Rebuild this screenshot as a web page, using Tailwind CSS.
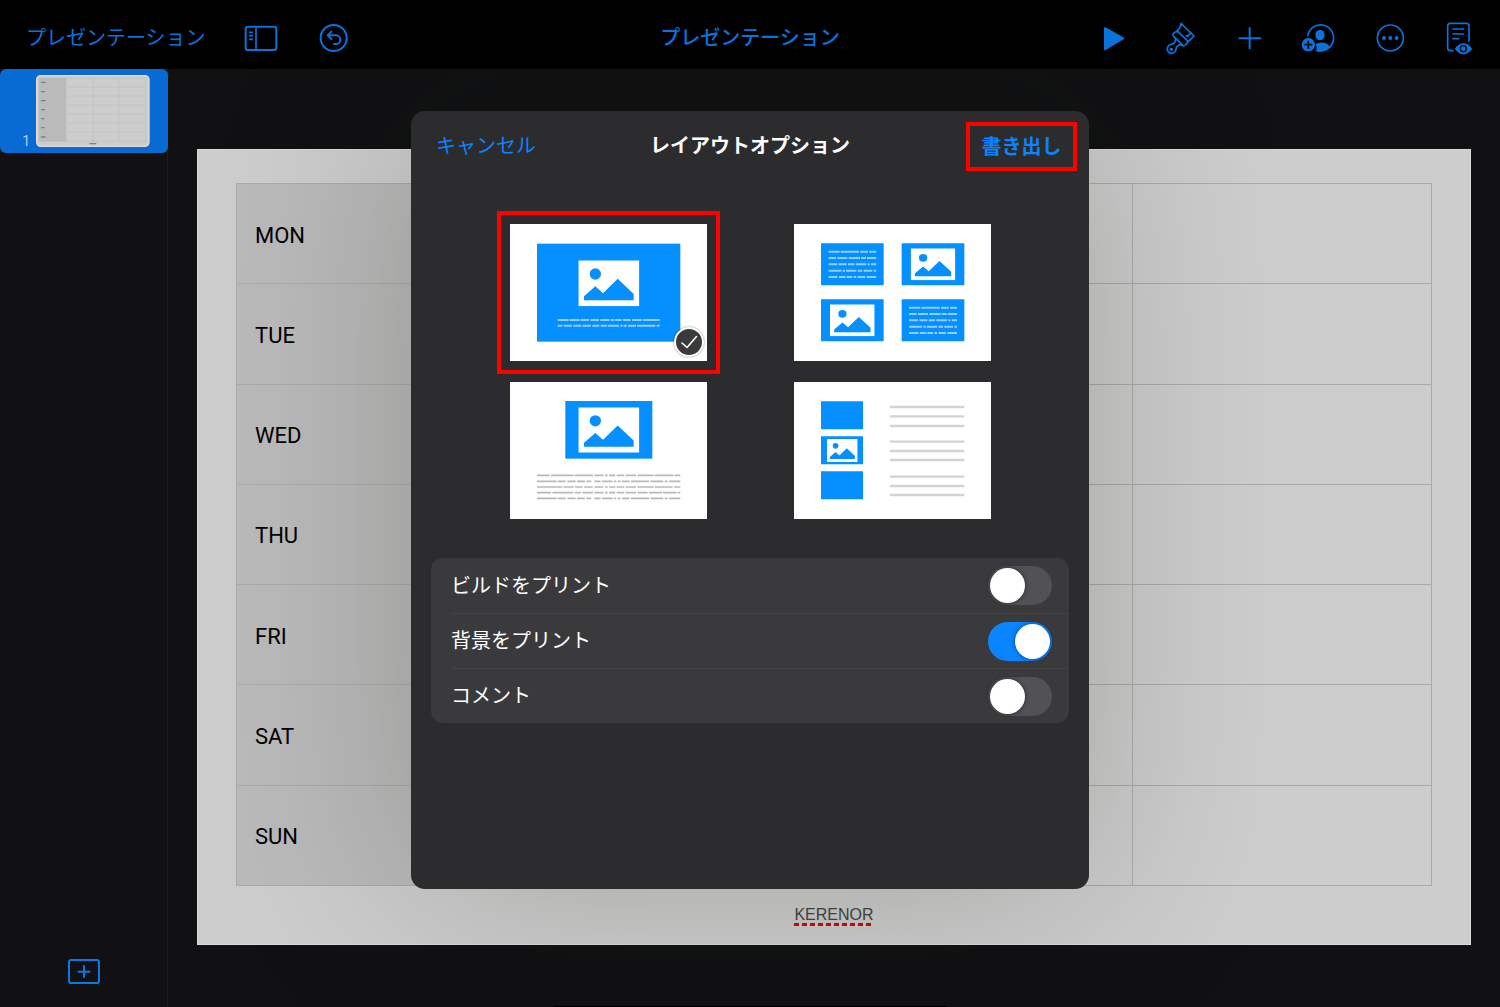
<!DOCTYPE html>
<html lang="ja">
<head>
<meta charset="utf-8">
<meta name="viewport" content="width=device-width, initial-scale=1">
<title>プレゼンテーション</title>
<script src="https://cdn.jsdelivr.net/npm/@tailwindcss/browser@4"></script>
</head>
<body class="relative flex min-h-screen flex-col overflow-x-hidden bg-[#111113] font-['Noto_Sans_CJK_JP',sans-serif] text-xl leading-7">

<!-- Shared picture placeholder and text block -->
<svg class="hidden" aria-hidden="true">
  <symbol id="pic" viewBox="0 0 183 138" preserveAspectRatio="none">
    <rect width="183" height="138" fill="#fff"/>
    <circle cx="51" cy="41" r="17" fill="#058fff"/>
    <path d="M17 108 51 78 74 99 118 55 166 101V120H17Z" fill="#058fff"/>
  </symbol>
  <symbol id="lines" viewBox="143 120 145 84">
    <path stroke="#95cdff" stroke-width="6" d="M143 124H177M180 124H235M239 124H262M266 124H287M143 143H166M170 143H200M204 143H238M241 143H256M259 143H287M143 162H170M174 162H198M202 162H221M225 162H257M261 162H267M271 162H287M143 181H182M186 181H193M196 181H227M231 181H245M249 181H275M279 181H287M143 200H171M175 200H195M198 200H215M219 200H227M231 200H254M258 200H287"/>
  </symbol>
</svg>

<header class="grid h-[69px] grid-cols-[1fr_auto_1fr] items-center bg-black px-[22px] pt-2 text-[#0b72dc]">
  <div class="flex items-center gap-[37px] pl-1">
    <a href="#" class="pb-[3px] whitespace-nowrap">プレゼンテーション</a>
    <button type="button" aria-label="表示"><svg class="size-9" viewBox="729 62 108 108" fill="none" stroke="currentColor" stroke-width="6"><rect x="737" y="79" width="92" height="70" rx="7"/><path d="M768 79V149M747 96H759M747 106H759M747 117H759" stroke-width="5"/></svg></button>
    <button type="button" aria-label="取り消す"><svg class="size-9" viewBox="948 62 108 108" fill="none" stroke="currentColor" stroke-width="6" stroke-linecap="round" stroke-linejoin="round"><circle cx="1001" cy="113" r="39"/><path d="M994 94 983 105 994 116M984 105H1008A13 13 0 0 1 1008 131H1002"/></svg></button>
  </div>
  <h1 class="pb-[3px] font-medium">プレゼンテーション</h1>
  <div class="flex justify-end gap-[33px]">
    <button type="button" aria-label="再生"><svg class="size-9" viewBox="51 62 108 108" fill="currentColor"><path d="M72 84Q72 79 77 81L132 112Q135 114 132 116L77 149Q72 151 72 146Z"/></svg></button>
    <button type="button" aria-label="フォーマット"><svg class="size-9" viewBox="258 62 108 108" fill="none" stroke="currentColor" stroke-width="5" stroke-linejoin="round" stroke-linecap="round"><path d="M303 69 342 107 325 124 291 91Q302 84 303 69ZM291 94Q283 94 279 101Q278 105 281 108L309 136Q313 138 318 132Q323 128 322 123M284 111Q290 121 281 130L268 134Q257 143 265 155Q277 164 286 153L290 140Q296 130 306 135M333 97 323 108 L319 106"/><circle cx="274" cy="147" r="5" fill="currentColor" stroke="none"/></svg></button>
    <button type="button" aria-label="追加"><svg class="size-9" viewBox="465 62 108 108" fill="none" stroke="currentColor" stroke-width="6"><path d="M509 81V147M476 114H543"/></svg></button>
    <button type="button" aria-label="共同制作"><svg class="size-9 overflow-visible" viewBox="672 62 108 108" fill="currentColor"><path d="M683 108A39 39 0 1 1 711 150" fill="none" stroke="currentColor" stroke-width="5"/><ellipse cx="720" cy="104" rx="14" ry="16"/><path d="M707 153Q714 143 706 132Q720 123 738 129Q747 133 748 139Q733 158 707 153Z"/><circle cx="685" cy="133" r="20"/><path d="M685 121V145M673 133H697" stroke="#000" stroke-width="5"/></svg></button>
    <button type="button" aria-label="その他"><svg class="size-9" viewBox="879 62 108 108" fill="currentColor"><circle cx="931" cy="113" r="39" fill="none" stroke="currentColor" stroke-width="5"/><circle cx="912" cy="113" r="6"/><circle cx="931" cy="113" r="6"/><circle cx="950" cy="113" r="6"/></svg></button>
    <button type="button" aria-label="閲覧モード"><svg class="size-9" viewBox="1086 62 108 108" fill="none" stroke="currentColor" stroke-width="5"><path d="M1121 151H1111Q1103 151 1103 143V77Q1103 69 1111 69H1159Q1167 69 1167 77V124M1117 86H1153M1117 101H1153M1117 115H1137"/><path d="M1124 145Q1150 112 1177 145Q1150 178 1124 145Z" fill="currentColor" stroke="none"/><circle cx="1150" cy="145" r="9" stroke="#000" stroke-width="4"/></svg></button>
  </div>
</header>

<div class="flex flex-1">
  <nav class="flex w-[168px] shrink-0 flex-col items-stretch justify-between border-r border-[#1d1d1f] pb-[23px]" aria-label="スライド">
    <a href="#" class="-mr-px flex h-[84px] items-end rounded-md bg-[#086bd3] pb-1.5">
      <span class="w-9 pr-1.5 text-right font-['Roboto',sans-serif] text-sm leading-3 text-[#b9cde6]">1</span>
      <svg class="h-[72px] w-[114px]" viewBox="109 226 342 216">
        <rect x="111" y="228" width="337" height="212" rx="12" fill="#cdcdcd" stroke="#e4dcd4" stroke-width="4"/>
        <rect x="118" y="235" width="82" height="190" fill="#bababa"/>
        <path d="M118 235H438V425H118ZM118 262H438M118 289H438M118 316H438M118 343H438M118 370H438M118 397H438M280 235V425M358 235V425" fill="none" stroke="#bfbfbf" stroke-width="2"/>
        <path d="M124 248H138M124 276H136M124 303H138M124 330H137M124 357H134M124 384H135M124 412H138M269 432H290" stroke="#808080" stroke-width="4"/>
      </svg>
    </a>
    <button type="button" class="self-center text-[#0b78e6]" aria-label="スライドを追加"><svg class="h-[25px] w-8" viewBox="0 0 96 75" fill="none" stroke="currentColor" stroke-width="6"><rect x="3" y="3" width="90" height="69" rx="7"/><path d="M48 19V56M29 38H67"/></svg></button>
  </nav>

  <main class="flex-1 px-[29px] pt-20 pb-[62px]">
    <section class="flex min-h-[796px] flex-col border border-[#d9d9d9] bg-[#cdcdcd] pt-[33px] pr-[38px] pl-[38px] text-black">
      <table class="h-[703px] w-full table-fixed border-collapse font-['Roboto',sans-serif] text-[22px] [&_td]:border [&_td]:border-[#a9aaa9] [&_th]:border [&_th]:border-[#a9aaa9] [&_th]:bg-[#bababa] [&_th]:pt-1 [&_th]:pl-[18px] [&_th]:text-left [&_th]:font-normal">
        <tbody>
          <tr><th scope="row">MON</th><td></td><td></td><td></td></tr>
          <tr><th scope="row">TUE</th><td></td><td></td><td></td></tr>
          <tr><th scope="row">WED</th><td></td><td></td><td></td></tr>
          <tr><th scope="row">THU</th><td></td><td></td><td></td></tr>
          <tr><th scope="row">FRI</th><td></td><td></td><td></td></tr>
          <tr><th scope="row">SAT</th><td></td><td></td><td></td></tr>
          <tr><th scope="row">SUN</th><td></td><td></td><td></td></tr>
        </tbody>
      </table>
      <p class="mt-[18px] self-center bg-[repeating-linear-gradient(90deg,#c80f0f_0_5px,transparent_5px_8px)] bg-[length:100%_3px] bg-bottom bg-no-repeat font-['Liberation_Sans',sans-serif] text-base leading-[22px] text-[#444]">KERENOR</p>
    </section>
  </main>
</div>

<!-- Home indicator -->
<div class="absolute bottom-0 left-1/2 h-px w-[394px] -translate-x-1/2 bg-black"></div>

<!-- Export dialog -->
<div class="absolute inset-x-0 top-[69px] bottom-0 flex items-start justify-center overflow-hidden pt-[42px]">
  <form role="dialog" aria-labelledby="dialog-title" class="w-full max-w-[678px] rounded-[14px] bg-[#2c2c2e] px-5 pb-[166px] text-white shadow-[0_0_200px_rgba(12,18,4,0.22)]">
    <div class="-mx-2 grid h-[70px] grid-cols-[1fr_auto_1fr] items-center">
      <button type="button" class="justify-self-start pb-0.5 pl-[13px] text-[#0a84ff]">キャンセル</button>
      <h2 id="dialog-title" class="pb-0.5 font-bold">レイアウトオプション</h2>
      <button type="button" class="h-[49px] w-[111px] justify-self-end border-4 border-[#f00] font-bold text-[#0a84ff]">書き出し</button>
    </div>

    <fieldset aria-label="レイアウト" class="mt-[43px] grid grid-cols-[repeat(2,197px)] justify-center gap-x-[87px] gap-y-[21px]">
      <label class="relative" aria-label="スライド">
        <input type="radio" name="layout" class="peer sr-only" checked>
        <svg class="block h-[137px] w-full bg-white" viewBox="58 55 591 411">
          <rect x="139" y="114" width="430" height="294" fill="#058fff"/>
          <use href="#pic" x="263" y="164" width="183" height="138"/>
          <path stroke="#95cdff" stroke-width="6" d="M201 343H234M237 343H267M270 343H295M299 343H325M329 343H357M360 343H370M373 343H393M397 343H420M424 343H454M457 343H507M201 360H215M219 360H244M248 360H272M276 360H301M305 360H326M330 360H348M351 360H385M389 360H396M399 360H408M412 360H436M439 360H494M498 360H507"/>
        </svg>
        <span class="absolute right-[3px] bottom-1 hidden size-[30px] rounded-full border-2 border-white bg-[#3a3a3c] shadow-[0_0_2px_rgba(0,0,0,0.5)] peer-checked:block">
          <svg viewBox="0 0 26 26" fill="none" stroke="#fff" stroke-width="1.600" stroke-linecap="round" stroke-linejoin="round"><path d="M6 14 11 18.500 20.500 7.500"/></svg>
        </span>
        <span class="absolute -inset-[13px] border-4 border-[#f00]"></span>
      </label>
      <label class="relative" aria-label="グリッド">
        <input type="radio" name="layout" class="sr-only">
        <svg class="block h-[137px] w-full bg-white" viewBox="40 41 591 411">
          <path d="M121 99H309V225H121ZM363 99H551V225H363ZM121 267H309V393H121ZM363 267H551V393H363Z" fill="#058fff"/>
          <use href="#lines" x="143" y="120" width="145" height="84"/>
          <use href="#lines" x="385" y="288" width="145" height="84"/>
          <use href="#pic" x="390" y="114" width="134" height="96"/>
          <use href="#pic" x="148" y="282" width="134" height="96"/>
        </svg>
      </label>
      <label class="relative" aria-label="発表者ノート付き">
        <input type="radio" name="layout" class="sr-only">
        <svg class="block h-[137px] w-full bg-white" viewBox="28 21 591 411">
          <rect x="194" y="78" width="261" height="173" fill="#058fff"/>
          <use href="#pic" x="233" y="97" width="183" height="136"/>
          <path stroke="#b9b9b9" stroke-width="5" d="M109 301H147M151 301H219M222 301H277M281 301H309M313 301H321M325 301H344M348 301H371M375 301H406M410 301H459M462 301H519M522 301H539M109 319H168M171 319H195M200 319H225M229 319H253M257 319H272M281 319H300M304 319H336M340 319H347M351 319H360M364 319H387M391 319H445M449 319H488M492 319H501M505 319H539M109 336H186M189 336H219M223 336H246M250 336H276M281 336H308M313 336H321M325 336H344M348 336H371M375 336H406M410 336H459M462 336H516M520 336H539M109 353H151M155 353H218M222 353H241M245 353H277M281 353H309M313 353H321M325 353H344M348 353H371M375 353H406M410 353H441M445 353H484M487 353H528M531 353H539M109 370H168M171 370H195M200 370H225M229 370H253M257 370H272M281 370H300M304 370H336M340 370H347M351 370H360M364 370H387M391 370H445M449 370H488M492 370H501M505 370H539"/>
        </svg>
      </label>
      <label class="relative" aria-label="配布資料">
        <input type="radio" name="layout" class="sr-only">
        <svg class="block h-[137px] w-full bg-white" viewBox="40 21 591 411">
          <path d="M121 79H247V163H121ZM121 184H247V268H121ZM121 289H247V373H121Z" fill="#058fff"/>
          <use href="#pic" x="139" y="192" width="92" height="69"/>
          <path stroke="#d3d3d3" stroke-width="7" d="M328 96H551M328 124H551M328 153H551M328 200H551M328 228H551M328 255H551M328 305H551M328 333H551M328 360H551"/>
        </svg>
      </label>
    </fieldset>

    <div class="mt-[39px] rounded-xl bg-[#3a3a3c] pl-5 [&_input]:relative [&_input]:h-[39px] [&_input]:w-16 [&_input]:appearance-none [&_input]:rounded-full [&_input]:bg-[#515156] [&_input]:before:absolute [&_input]:before:top-[2px] [&_input]:before:left-[2px] [&_input]:before:size-[35px] [&_input]:before:rounded-full [&_input]:before:bg-white [&_input]:before:shadow-[0_0_4px_rgba(0,0,0,0.5)] [&_input:checked]:bg-[#0a84ff] [&_input:checked]:before:left-[27px] [&_label]:flex [&_label]:h-[55px] [&_label]:items-center [&_label]:justify-between [&_label]:pr-[17px] [&_span]:pb-0.5">
      <label><span>ビルドをプリント</span><input type="checkbox" role="switch"></label>
      <label class="border-t border-[#444447]"><span>背景をプリント</span><input type="checkbox" role="switch" checked></label>
      <label class="border-t border-[#444447]"><span>コメント</span><input type="checkbox" role="switch"></label>
    </div>
  </form>
</div>
</body>
</html>
